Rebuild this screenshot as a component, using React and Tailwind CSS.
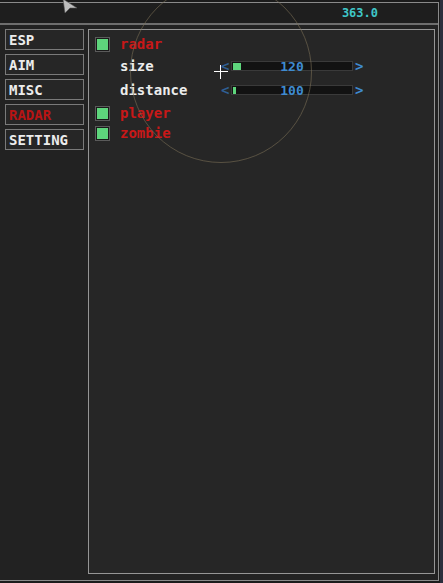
import React from "react";

function Check() {
  return (
    <div className="w-[15px] h-[15px] border border-[#5a5a5a] bg-[#1a1a1a] p-[1px] shrink-0">
      <div className="w-full h-full bg-[#5ed57c]" />
    </div>
  );
}

function Slider({ value, fill }) {
  return (
    <div className="absolute left-[126px] top-0 h-full flex items-center">
      <span className="w-[10px] text-[14px] text-[#2f5f93] leading-none">&lt;</span>
      <div className="relative w-[122px] h-[10px] bg-[#121212] border border-[#3a3a3a] flex items-center px-[1px]">
        <div className="h-[7px] bg-[#5ed57c]" style={{ width: fill }} />
        <span className="absolute inset-0 flex items-center justify-center text-[13px] text-[#3f8bd0] leading-none">
          {value}
        </span>
      </div>
      <span className="ml-[2px] text-[14px] text-[#3f8bd0] leading-none">&gt;</span>
    </div>
  );
}

export default function App() {
  const nav = ["ESP", "AIM", "MISC", "RADAR", "SETTING"];
  return (
    <div
      className="relative w-[443px] h-[583px] bg-[#1b1b1b] overflow-hidden font-bold"
      style={{ fontFamily: "'DejaVu Sans Mono', 'Liberation Mono', monospace" }}
    >
      <div className="absolute left-[440px] top-0 w-[3px] h-full bg-[#2b2e3c]" />
      <div className="flex flex-col w-[439px] h-[579px] mt-[2px] border-t border-r border-b border-[#8a8a8a] bg-[#1f1f1f]">
        <div className="h-[22px] border-b-2 border-[#6e6e6e] flex items-center justify-end pr-[60px] bg-[#1e1e1e]">
          <span className="text-[12px] text-[#3fc6c8]">363.0</span>
        </div>
        <div className="flex flex-1 pt-[4px] pb-[6px] pl-[5px] pr-[3px] gap-[4px] bg-[#222222]">
          <div className="flex flex-col gap-[4px] w-[79px]">
            {nav.map((n) => (
              <div
                key={n}
                className={`h-[21px] border border-[#7a7a7a] bg-[#262626] flex items-center pl-[3px] text-[14px] leading-none ${
                  n === "RADAR" ? "text-[#b81414]" : "text-[#ececec]"
                }`}
              >
                {n}
              </div>
            ))}
          </div>
          <div className="flex-1 border border-[#959595] bg-[#262626] pt-[4px] pl-[6px]">
            <div className="h-[20px] flex items-center">
              <Check />
              <span className="ml-[10px] text-[14px] text-[#c81818]">radar</span>
            </div>
            <div className="relative h-[24px] flex items-center">
              <span className="ml-[25px] text-[14px] text-[#ececec]">size</span>
              <Slider value="120" fill="8px" />
            </div>
            <div className="relative h-[24px] flex items-center">
              <span className="ml-[25px] text-[14px] text-[#ececec]">distance</span>
              <Slider value="100" fill="3px" />
            </div>
            <div className="h-[22px] flex items-center">
              <Check />
              <span className="ml-[10px] text-[14px] text-[#c81818]">player</span>
            </div>
            <div className="h-[18px] flex items-center">
              <Check />
              <span className="ml-[10px] text-[14px] text-[#c81818]">zombie</span>
            </div>
          </div>
        </div>
      </div>
      {/* radar circle overlay */}
      <div className="absolute left-[130px] top-[-19px] w-[182px] h-[182px] rounded-full border border-[#7a6e55]/60 pointer-events-none" />
      {/* crosshair */}
      <div className="absolute left-[214px] top-[71px] w-[14px] h-[1px] bg-white" />
      <div className="absolute left-[220px] top-[65px] w-[1px] h-[14px] bg-white" />
      {/* mouse pointer */}
      <svg className="absolute left-[61px] top-[-2px]" width="20" height="18" viewBox="0 0 20 18">
        <polygon points="2,1 16,10 9,10 4,15" fill="#bfbfbf" stroke="#555" strokeWidth="0.6" />
      </svg>
    </div>
  );
}
